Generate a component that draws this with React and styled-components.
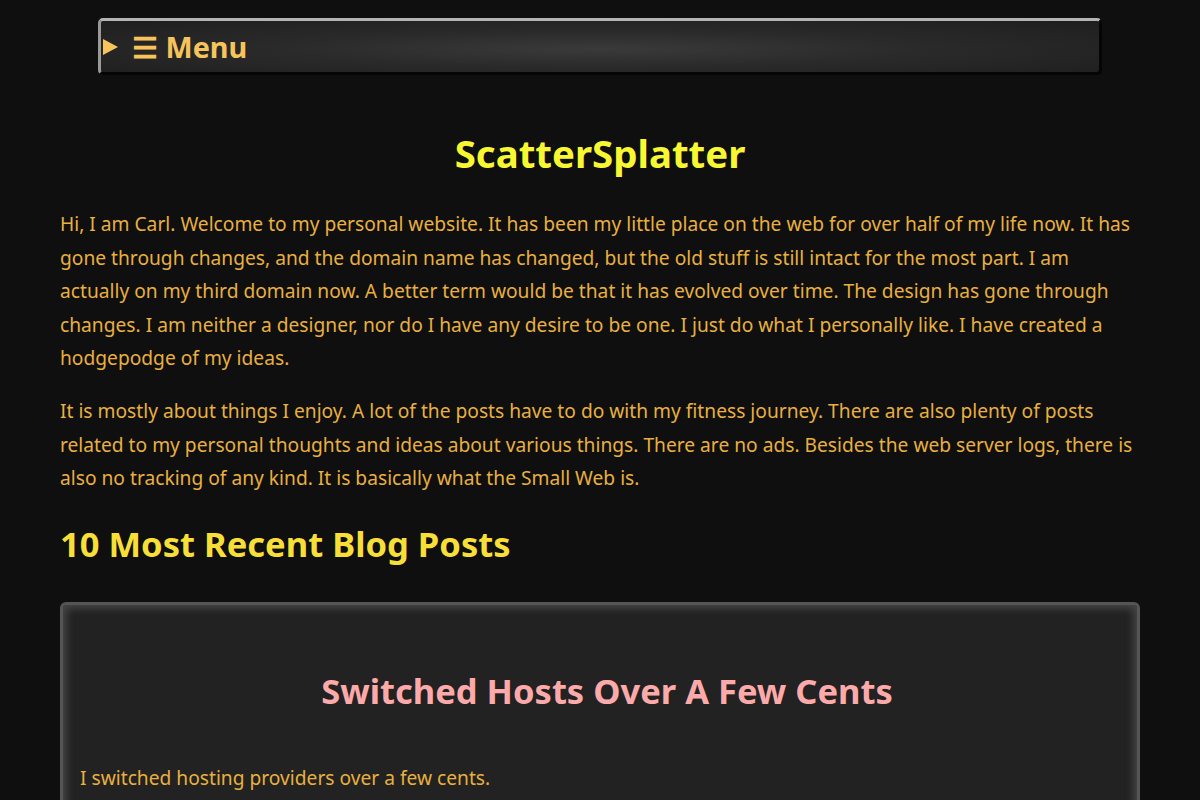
import React from "react";
import styled, { createGlobalStyle } from "styled-components";

const GlobalStyle = createGlobalStyle`
  html, body {
    margin: 0;
    padding: 0;
    background: #0f0f0f;
  }
  body {
    font-family: "Noto Sans", "Open Sans", sans-serif;
    color: #e8b040;
  }
`;

const Page = styled.div`
  padding-top: 18px;
`;

const MenuBar = styled.div`
  width: 1004px;
  height: 57px;
  box-sizing: border-box;
  margin: 0 auto;
  display: flex;
  align-items: center;
  gap: 14px;
  padding-left: 2px;
  border-top: 3px solid #b4b4b4;
  border-left: 3px solid #9a9a9a;
  border-right: 3px solid #050505;
  border-bottom: 3px solid #050505;
  border-radius: 5px;
  background: radial-gradient(ellipse at 50% 55%, #3a3a3a 0%, #2a2a2a 45%, #1e1e1e 100%);
  color: #f7c45c;
  font-weight: 700;
  font-size: 28.8px;
`;

const Marker = styled.span`
  width: 0;
  height: 0;
  border-top: 8px solid transparent;
  border-bottom: 8px solid transparent;
  border-left: 15px solid #f7c45c;
`;

const Main = styled.main`
  width: 1080px;
  margin: 0 auto;
`;

const Title = styled.h1`
  margin: 55px 0 31px;
  text-align: center;
  font-size: 38.4px;
  line-height: 46px;
  font-weight: 700;
  color: #f8f832;
`;

const Para = styled.p`
  margin: 0 0 19px;
  font-size: 19.2px;
  line-height: 33.6px;
  color: #e8b040;
`;

const SectionHeading = styled.h2`
  margin: 28px 0 38px;
  font-size: 34.56px;
  line-height: 41px;
  font-weight: 700;
  color: #f8df38;
`;

const Card = styled.article`
  box-sizing: border-box;
  background: #222222;
  border: 3px solid #555555;
  border-radius: 6px;
  box-shadow: inset 0 0 8px 3px #4a4a4a;
  padding: 65px 17px 40px;
`;

const CardTitle = styled.h3`
  margin: 0 0 50px;
  padding-left: 14px;
  text-align: center;
  font-size: 34.5px;
  line-height: 41px;
  font-weight: 700;
  color: #ffaaaa;
`;

export default function App() {
  return (
    <>
      <GlobalStyle />
      <Page>
        <MenuBar>
          <Marker />
          <span>☰ Menu</span>
        </MenuBar>
        <Main>
          <Title>ScatterSplatter</Title>
          <Para>
            Hi, I am Carl. Welcome to my personal website. It has been my little place on the web for over half of my life now. It has gone through changes, and the domain name has changed, but the old stuff is still intact for the most part. I am actually on my third domain now. A better term would be that it has evolved over time. The design has gone through changes. I am neither a designer, nor do I have any desire to be one. I just do what I personally like. I have created a hodgepodge of my ideas.
          </Para>
          <Para>
            It is mostly about things I enjoy. A lot of the posts have to do with my fitness journey. There are also plenty of posts related to my personal thoughts and ideas about various things. There are no ads. Besides the web server logs, there is also no tracking of any kind. It is basically what the Small Web is.
          </Para>
          <SectionHeading>10 Most Recent Blog Posts</SectionHeading>
          <Card>
            <CardTitle>Switched Hosts Over A Few Cents</CardTitle>
            <Para>I switched hosting providers over a few cents.</Para>
          </Card>
        </Main>
      </Page>
    </>
  );
}
